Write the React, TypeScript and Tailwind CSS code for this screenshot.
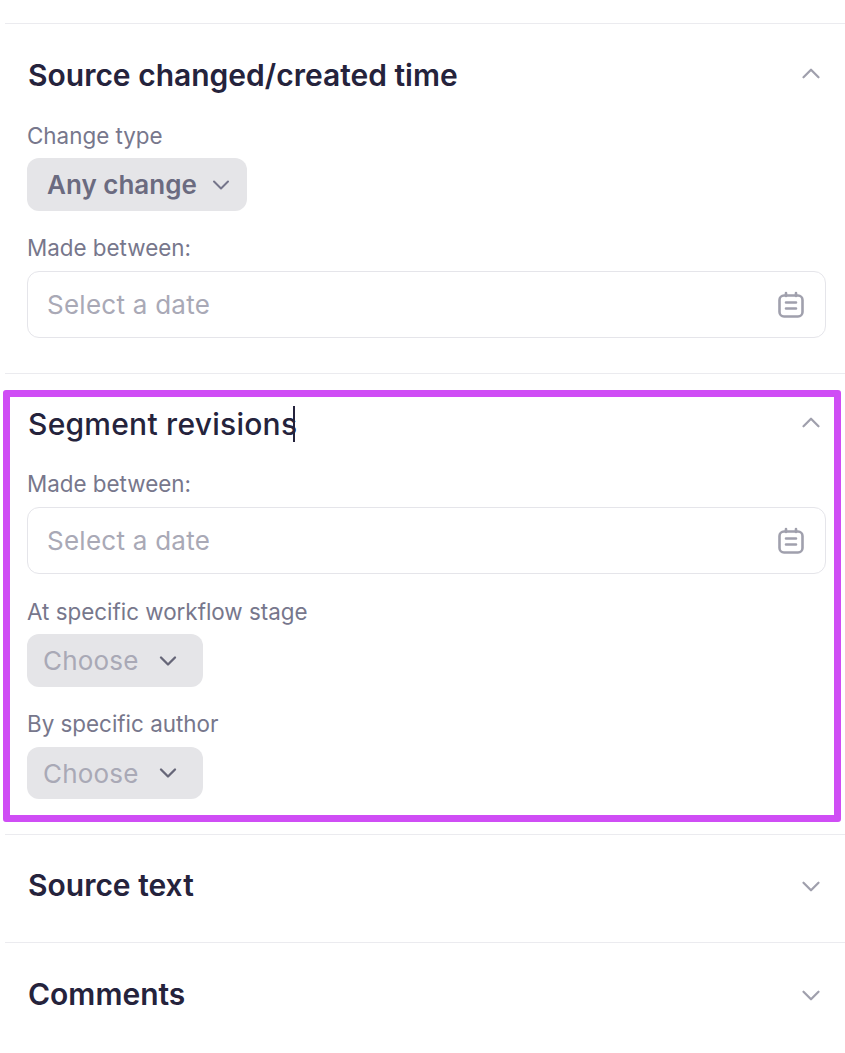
import React from 'react';
import { ChevronDown, ChevronUp } from 'lucide-react';

const CalendarIcon = () => (
  <svg width="28" height="28" viewBox="0 0 28 28" fill="none" stroke="#a0a0ad" strokeWidth="2.6" strokeLinecap="round" strokeLinejoin="round">
    <rect x="2.5" y="4.5" width="23" height="21" rx="4.5" />
    <path d="M9 2v3M19 2v3M9 11.5h10M9 17.5h10" />
  </svg>
);

const DateInput = () => (
  <div className="flex h-[67px] items-center justify-between rounded-xl border border-[#e5e5ea] bg-white pl-[19px] pr-[20px]">
    <span className="text-[26px] tracking-[0.25px] text-[#a9a9b6]">Select a date</span>
    <CalendarIcon />
  </div>
);

const Label = ({ children }: { children: React.ReactNode }) => (
  <div className="text-[22.4px] leading-[30px] text-[#77778c]">{children}</div>
);

const Choose = ({ height }: { height: string }) => (
  <div className={`flex w-[176px] items-center justify-between rounded-xl bg-[#e5e5e8] pl-[16px] pr-[21px] ${height}`}>
    <span className="text-[26px] tracking-[0.2px] text-[#a9a9b6]">Choose</span>
    <ChevronDown size={28} color="#666678" strokeWidth={2} />
  </div>
);

const Title = ({ children, open, medium }: { children: React.ReactNode; open: boolean; medium?: boolean }) => (
  <div className="flex items-center justify-between">
    <div className={`pl-[1px] text-[30px] leading-[40px] text-[#25233c] ${medium ? 'font-medium tracking-[0.25px]' : 'font-semibold'}`}>
      {children}
    </div>
    {open ? (
      <ChevronUp size={30} color="#a0a0ad" strokeWidth={1.8} className="-translate-y-[1.5px]" />
    ) : (
      <ChevronDown size={30} color="#a0a0ad" strokeWidth={1.8} className="translate-y-[1.5px]" />
    )}
  </div>
);

export default function App() {
  return (
    <div className="h-[1053px] w-[845px] overflow-hidden bg-white font-['Inter',sans-serif]">
      <div className="pt-[23px]">
        <div className="ml-[5px] border-t border-[#ebebef] pl-[22px] pr-[19px] pt-[31px]">
          <Title open>Source changed/created time</Title>
          <div className="mt-[26px]"><Label>Change type</Label></div>
          <div className="mt-[7px] flex h-[53px] w-[220px] items-center justify-between rounded-xl bg-[#e5e5e8] pl-[20px] pr-[12px]">
            <span className="text-[26px] font-semibold text-[#6b6b80]">Any change</span>
            <ChevronDown size={28} color="#75758a" strokeWidth={1.7} />
          </div>
          <div className="mt-[22px]"><Label>Made between:</Label></div>
          <div className="mt-[8px]"><DateInput /></div>
        </div>
        <div className="ml-[5px] mt-[35px] border-t border-[#ebebef]" />
      </div>

      <div className="ml-[3px] mt-[16px] h-[432px] w-[838px] rounded-[3px] border-[7px] border-[#cf4df5] pl-[17px] pr-[8px] pt-[7px]">
        <div className="relative">
          <Title open medium>Segment revisions</Title>
          <div className="absolute left-[266px] top-[2px] h-[36px] w-[2px] bg-[#25233c]" />
        </div>
        <div className="mt-[25px]"><Label>Made between:</Label></div>
        <div className="mt-[8px]"><DateInput /></div>
        <div className="mt-[23px]"><Label>At specific workflow stage</Label></div>
        <div className="mt-[7px]"><Choose height="h-[53px]" /></div>
        <div className="mt-[22px]"><Label>By specific author</Label></div>
        <div className="mt-[8px]"><Choose height="h-[52px]" /></div>
      </div>

      <div className="ml-[5px] mt-[12px] border-t border-[#ebebef] pl-[22px] pr-[19px] pt-[30px]">
        <Title open={false}>Source text</Title>
      </div>
      <div className="ml-[5px] mt-[37px] border-t border-[#ebebef] pl-[22px] pr-[19px] pt-[31px]">
        <Title open={false}>Comments</Title>
      </div>
    </div>
  );
}
